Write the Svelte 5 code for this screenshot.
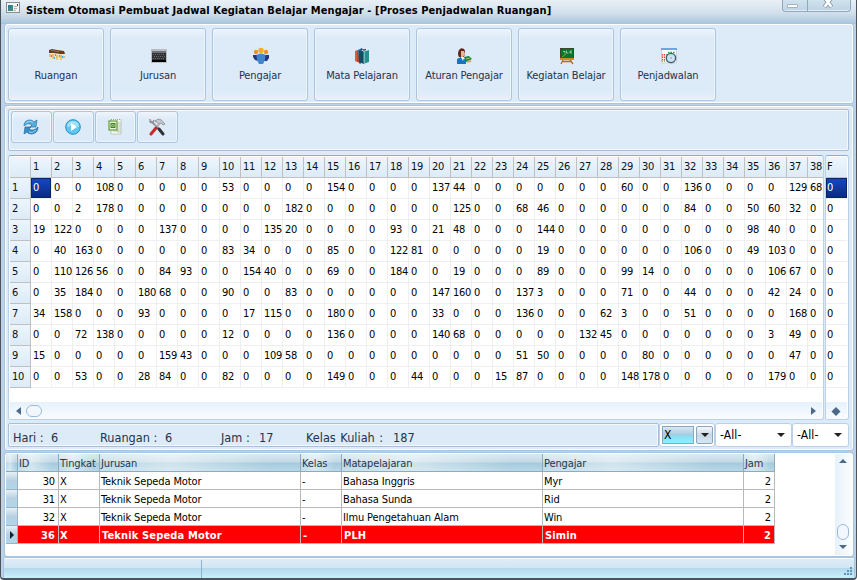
<script>
  const menu = ['Ruangan', 'Jurusan', 'Pengajar', 'Mata Pelajaran', 'Aturan Pengajar', 'Kegiatan Belajar', 'Penjadwalan'];
  const tools = ['refresh', 'play', 'excel', 'settings'];
  const columns = Array.from({ length: 38 }, (_, i) => i + 1);

  // Only the occupied slots are listed; every other slot is 0.
  const schedule = [
    { 4: 108, 10: 53, 15: 154, 20: 137, 21: 44, 29: 60, 32: 136, 37: 129, 38: 68 },
    { 3: 2, 4: 178, 13: 182, 21: 125, 24: 68, 25: 46, 32: 84, 35: 50, 36: 60, 37: 32 },
    { 1: 19, 2: 122, 7: 137, 12: 135, 13: 20, 18: 93, 20: 21, 21: 48, 25: 144, 35: 98, 36: 40 },
    { 2: 40, 3: 163, 10: 83, 11: 34, 15: 85, 18: 122, 19: 81, 25: 19, 32: 106, 35: 49, 36: 103 },
    { 2: 110, 3: 126, 4: 56, 7: 84, 8: 93, 11: 154, 12: 40, 15: 69, 18: 184, 21: 19, 25: 89, 29: 99, 30: 14, 36: 106, 37: 67 },
    { 2: 35, 3: 184, 6: 180, 7: 68, 10: 90, 13: 83, 20: 147, 21: 160, 24: 137, 25: 3, 29: 71, 32: 44, 36: 42, 37: 24 },
    { 1: 34, 2: 158, 6: 93, 11: 17, 12: 115, 15: 180, 20: 33, 24: 136, 28: 62, 29: 3, 32: 51, 37: 168 },
    { 3: 72, 4: 138, 10: 12, 15: 136, 20: 140, 21: 68, 27: 132, 28: 45, 36: 3, 37: 49 },
    { 1: 15, 7: 159, 8: 43, 12: 109, 13: 58, 24: 51, 25: 50, 30: 80, 37: 47 },
    { 3: 53, 6: 28, 7: 84, 10: 82, 15: 149, 19: 44, 23: 15, 24: 87, 29: 148, 30: 178, 36: 179 }
  ];

  const heads = ['', 'ID', 'Tingkat', 'Jurusan', 'Kelas', 'Matapelajaran', 'Pengajar', 'Jam'];
  const lessons = [
    [30, 'X', 'Teknik Sepeda Motor', '-', 'Bahasa Inggris', 'Myr', 2],
    [31, 'X', 'Teknik Sepeda Motor', '-', 'Bahasa Sunda', 'Rid', 2],
    [32, 'X', 'Teknik Sepeda Motor', '-', 'Ilmu Pengetahuan Alam', 'Win', 2],
    [36, 'X', 'Teknik Sepeda Motor', '-', 'PLH', 'Simin', 2]
  ];
</script>

<div class="window">
  <header class="title">
    <svg class="appicon" width="14" height="11" viewBox="0 0 14 11">
      <rect x=".5" y=".5" width="13" height="10" fill="#f4f4f2" stroke="#8c8f92" />
      <rect x="2" y="3" width="5" height="6" fill="#3c8a80" />
      <rect x="2" y="3" width="3" height="3" fill="#357a9c" />
      <path d="M8 4.500h3M8 6.500h3M8 8.500h2" stroke="#b0b4b6" />
      <path d="M11.500 2v2" stroke="#444" />
    </svg>
    <h1>Sistem Otomasi Pembuat Jadwal Kegiatan Belajar Mengajar - [Proses Penjadwalan Ruangan]</h1>
    <div class="winbtns">
      <span class="min"><i></i></span>
      <span class="close">
        <svg width="12" height="9" viewBox="0 0 12 9"><path d="M2.500-2.500l7 9.500M9.500-2.500l-7 9.500" stroke="#8297aa" stroke-width="4.200" /><path d="M2.500-2.500l6.800 9.300M9.500-2.500l-6.800 9.300" stroke="#fff" stroke-width="2.600" /></svg>
      </span>
    </div>
  </header>

  <nav class="panel menu">
    {#each menu as name, i}
      <button class="mbtn">
        <svg width="18" height="18" viewBox="0 0 18 18">
          {#if i === 0}
            <path d="M2 6h14v6l-4 1-4-1-6-1z" fill="#f1e3c4" />
            <path d="M1 3l3-1 5 1 7 1 1 3-5 0-6-1-5 0z" fill="#693b19" />
            <path d="M3 3l4 1 4 1" stroke="#a2714c" fill="none" />
            <path d="M2 7v3M5 7v4M9 8v3M13 8v3M16 9v2" stroke="#e9a03c" stroke-width="1.300" />
            <path d="M3 9h1M7 8h1M11 9h1M14 10h1M6 11h1" stroke="#35aedc" stroke-width="2" />
            <path d="M4 11h2M8 12h2M12 12h2" stroke="#edc94b" stroke-width="1.500" />
          {:else if i === 1}
            <path d="M1 2h16v14H1z" fill="#b9bcc0" />
            <path d="M2 4h14v11H2z" fill="#303235" />
            <path d="M2 4h14v2H2z" fill="#707276" />
            <path d="M3 7.500h12M4 9.500h11M3 11.500h12" stroke="#66696d" stroke-dasharray="1 1" />
            <path d="M2 14h14" stroke="#000" stroke-width="2" />
          {:else if i === 2}
            <circle cx="4" cy="5" r="2.200" fill="#ee922d" />
            <circle cx="14" cy="5" r="2.200" fill="#ee922d" />
            <path d="M1 8h4l1 6-3-1-2-3zM13 8h4v3l-2 3h-3z" fill="#263580" />
            <circle cx="9" cy="3.500" r="2.700" fill="#f4ae24" />
            <path d="M4.500 8Q9 5 13.500 8L13 13 11 17H7L5 13z" fill="#3f86cb" />
          {:else if i === 3}
            <path d="M1 4l3-1 2 13-5-2z" fill="#d93c27" />
            <path d="M4 3l4-2 1 14-3 2-1-1z" fill="#286695" />
            <path d="M8 2l4-1 3 2-5 2z" fill="#e8eff5" />
            <path d="M5 4l5 1v12l-5-2z" fill="#124d66" />
            <path d="M9 5l6-2v12l-6 2z" fill="#268f8e" />
            <path d="M10.500 5v11" stroke="#72bcb6" />
            <path d="M7 2l5 1M8 5l4-3" stroke="#26324d" stroke-width=".8" />
            <path d="M2 4v10" stroke="#f38162" stroke-width=".8" />
          {:else if i === 4}
            <path d="M3 3Q5 0 8 2q2 2 0 8H3Q1 7 3 3z" fill="#63251d" />
            <path d="M5 4l3 0 1 3-2 3H5z" fill="#edb58b" />
            <path d="M1 16v-4l4-2 5 3v4H1z" fill="#1974be" />
            <path d="M5 10l2 4 1-4z" fill="#fff" />
            <path d="M8 10l5-1 3 3-6 3z" fill="#1a843c" />
            <path d="M10 12l4-1" stroke="#a6cc60" />
            <path d="M11 15l4-1" stroke="#e2a171" stroke-width="2" />
          {:else if i === 5}
            <path d="M2 1h14v11H2z" fill="#3b452f" />
            <path d="M3 2h12v9H3z" fill="#08752d" />
            <path d="M5 4.500h2v2M8.500 3.500v2.500h2M14 4h-2v2h2" stroke="#b6d8b5" fill="none" stroke-width=".8" />
            <path d="M4 10L8 7" stroke="#89b93b" stroke-width=".8" />
            <path d="M2 11h14v2H2z" fill="#d28b25" />
            <path d="M5 13l-2 4M12 13l3 4M4 14.500h10" stroke="#b76c13" stroke-width="1.300" />
          {:else}
            <path d="M1.500 2h15v14h-15z" fill="#fafcff" stroke="#c6d5e1" />
            <path d="M1 1h16v2H1z" fill="#6da7db" />
            <path d="M2.500 7v8M4.500 7v8" stroke="#ee2d25" stroke-width="1.200" stroke-dasharray="1.500 1" />
            <path d="M7 7v8" stroke="#249944" stroke-width="1.500" stroke-dasharray="1.500 1" />
            <path d="M8 5.500h7" stroke="#249944" stroke-width="1.500" stroke-dasharray="1.500 1" />
            <circle cx="11" cy="11" r="4.700" fill="#badcf0" stroke="#4c5968" stroke-width="1.300" />
            <circle cx="11" cy="11" r="2.600" fill="#d1e8f6" />
            <circle cx="11" cy="11" r=".8" fill="#718294" />
          {/if}
        </svg>
        <span>{name}</span>
      </button>
    {/each}
  </nav>

  <main class="panel work">
    <div class="toolbar">
      {#each tools as tool}
        <button class="tbtn" aria-label={tool}>
          <svg width="18" height="18" viewBox="0 0 18 18">
            {#if tool === 'refresh'}
              <path d="M2 8Q2 2 8 2q3 0 4 2l3-2-1 7H8l2-2Q6 4 2 8z" fill="#55abd9" stroke="#2673ad" stroke-width=".7" />
              <path d="M16 9q0 6-6 7-4 0-5-2l-3 2 1-7h6l-2 2q4 3 9-2z" fill="#398ec7" stroke="#246a9e" stroke-width=".7" />
              <path d="M4 5Q7 2 11 4M7 14q3 2 7-2" fill="none" stroke="#a4dcf4" />
            {:else if tool === 'play'}
              <circle cx="9" cy="9" r="7.300" fill="#60c8f0" stroke="#238fcb" />
              <path d="M3 9Q3 3 9 3t6 6q-6-2-12 0z" fill="#a0e3fa" />
              <path d="M7 5l6 4-6 4z" fill="#fff" />
            {:else if tool === 'excel'}
              <path d="M5 1.500h10v14.500H5z" fill="#f5f7f1" stroke="#849778" stroke-width=".8" stroke-dasharray="1 1" />
              <path d="M12 4v11M14 4v11M7 13h6" stroke="#b5c0ad" stroke-width=".8" />
              <rect x="3" y="3" width="8" height="9" fill="#e9f2df" stroke="#639d3b" stroke-width="1.200" />
              <path d="M5 5.500l4 4M9 5.500l-4 4M5 5.500h4v4H5z" fill="none" stroke="#44841e" />
            {:else}
              <path d="M3 3l9 9" stroke="#9a9da0" stroke-width="2" />
              <path d="M2 1v3l3 1 1-3" fill="none" stroke="#8d9194" stroke-width="1.400" />
              <path d="M7 3q5-4 8 1l2 2-2 1-2-2-2 1z" fill="#c8cbce" stroke="#777b80" stroke-width=".7" />
              <path d="M12 5L8 10" stroke="#a9adb1" stroke-width="1.700" />
              <path d="M8 10l-5 6" stroke="#c52928" stroke-width="3" stroke-linecap="round" />
              <path d="M11 11l4 5" stroke="#303238" stroke-width="3" stroke-linecap="round" />
            {/if}
          </svg>
        </button>
      {/each}
    </div>

    <div class="grids">
      <section class="sheet wide">
        <div class="row head"><b></b>{#each columns as c}<span>{c}</span>{/each}</div>
        {#each schedule as slots, r}
          <div class="row"><b>{r + 1}</b>{#each columns as c}<span class:sel={r === 0 && c === 1}>{slots[c] ?? 0}</span>{/each}</div>
        {/each}
        <div class="hscroll"><i class="left"></i><i class="thumb"></i><i class="right"></i></div>
      </section>
      <section class="sheet narrow">
        <div class="row head"><span>F</span></div>
        {#each schedule as _, r}<div class="row"><span class:sel={r === 0}>0</span></div>{/each}
        <div class="hscroll"><svg width="10" height="9" viewBox="0 0 10 9"><path d="M5 0l4.500 4.500L5 9 .5 4.500z" fill="#4b6a89" /></svg></div>
      </section>
    </div>

    <div class="summary">
      <div class="stats">
        <p><span>Hari :</span><span>6</span></p>
        <p><span>Ruangan :</span><span>6</span></p>
        <p><span>Jam :</span><span>17</span></p>
        <p><span>Kelas Kuliah :</span><span>187</span></p>
      </div>
      <div class="combo active"><span>X</span><em><i></i></em></div>
      <div class="combo mid"><span>-All-</span><em><i></i></em></div>
      <div class="combo last"><span>-All-</span><em><i></i></em></div>
    </div>
  </main>

  <section class="panel list">
    <div class="table">
      <div class="tr th">{#each heads as h}<span>{h}</span>{/each}</div>
      {#each lessons as l, i}
        <div class="tr" class:picked={i === 3}>
          <span>{#if i === 3}<i class="mark"></i>{/if}</span>
          {#each l as v}<span>{v}</span>{/each}
        </div>
      {/each}
    </div>
    <div class="vscroll"><i class="up"></i><i class="vthumb"></i><i class="down"></i></div>
  </section>

  <footer>
    <span></span>
    <svg width="8" height="8" viewBox="0 0 8 8"><path d="M6 1h2M3 4h2M6 4h2M0 7h2M3 7h2M6 7h2" stroke="#5f95b8" stroke-width="2" /></svg>
  </footer>
</div>

<style>
  * { box-sizing: border-box; }
  :global(body) { margin: 0; }
  .window {
    width: 857px; height: 580px; overflow: hidden; display: flex; flex-direction: column;
    border: solid #4b545d; border-width: 0 1px 2px; padding: 0 3px 0 4px;
    background: #bcd2e8; border-radius: 0 0 4px 4px; color: #000;
    font: 11px/13px 'DejaVu Sans Condensed', 'DejaVu Sans', sans-serif; letter-spacing: -.12px;
  }
  button { font: inherit; letter-spacing: inherit; padding: 0; margin: 0; }
  .title { height: 24px; flex: none; margin: 0 -3px 0 -4px; padding-left: 5px; display: flex; align-items: flex-start; background: linear-gradient(#e9f0f6, #d2e0ec 55%, #adc7dd); border-bottom: 1px solid #a6c1da; }
  .appicon { margin-top: 2px; flex: none; }
  h1 { margin: 4px 0 0 6px; font-size: 11px; line-height: 14px; font-weight: bold; letter-spacing: .09px; white-space: nowrap; flex: 1; }
  .winbtns { width: 69px; height: 12px; margin-right: 5px; display: flex; border: 1px solid #8fa8bd; border-top: 0; border-radius: 0 0 4px 4px; background: linear-gradient(#d0e3ef, #bdd2e2); box-shadow: inset 0 -1px #e3edf5; }
  .min { width: 25px; border-right: 1px solid #8fa8bd; display: flex; justify-content: center; align-items: flex-start; padding: 4px 6px 0 0; }
  .min i { width: 11px; height: 4px; background: #fff; border: 1px solid #a1b1bf; border-radius: 1px; }
  .close { flex: 1; display: flex; justify-content: center; padding-right: 3px; }

  .panel { border: 1px solid #fff; outline: 1px solid #a9c4df; background: #ddeaf8; border-radius: 2px; flex: none; }
  .menu { height: 79px; padding: 3px 2px; display: flex; gap: 6px; }
  .mbtn { width: 96px; height: 73px; border: 1px solid #acc5e3; border-radius: 3px; box-shadow: inset 0 0 0 1px #edf4fc; background: linear-gradient(#edf4fc, #ddeaf8 9px, #ddeaf8 62px, #e7f1fb); color: #23334d; display: flex; flex-direction: column; align-items: center; padding-top: 18px; gap: 4px; }
  .mbtn svg { margin-left: 1px; }
  .mbtn span { white-space: nowrap; }

  .work { height: 344px; margin-top: 3px; padding: 2px; display: flex; flex-direction: column; }
  .toolbar { height: 42px; width: 841px; padding: 1px 2px; display: flex; gap: 1px; border: 1px solid #a6c0db; box-shadow: inset 0 0 0 1px #f5f9fd; border-radius: 2px; }
  .tbtn { width: 41px; height: 32px; padding-right: 1px; display: flex; align-items: center; justify-content: center; border: 1px solid #acc5e3; border-radius: 3px; background: linear-gradient(#eef5fc, #ddeaf8 8px); box-shadow: inset 0 0 0 1px #edf4fc; }

  .grids { margin-top: 4px; height: 266px; display: flex; gap: 1px; }
  .sheet { border: 1px solid #b9d2e9; border-top-color: #8eafcb; border-radius: 3px; background: #fff; padding: 1px 1px 0; overflow: hidden; display: flex; flex-direction: column; }
  .wide { width: 816px; }
  .narrow { width: 24px; padding: 1px 1px 0 0; }
  .row { display: flex; height: 21px; flex: none; width: max-content; }
  .row > * { width: 21px; height: 21px; flex: none; padding: 3px 0 0 2px; border: solid #efefef; border-width: 0 1px 1px 0; line-height: 14px; font-weight: normal; white-space: nowrap; letter-spacing: -.3px; }
  .row b, .head > * { background: linear-gradient(#edf5fc, #dcebf7); border-color: #c0c0c0; color: #0a1018; }
  .row .sel { background: linear-gradient(#1747c6, #082a7c); color: #fff; box-shadow: inset 0 0 0 1px #0a246a; }
  .narrow .row, .narrow .row > * { width: 21px; }
  .narrow .row > * { border-right: 0; padding-left: 1px; }
  .hscroll { margin-top: auto; height: 17px; display: flex; align-items: center; padding: 1px 6px 0; background: linear-gradient(#e6f1fb, #f9fcff); flex: none; }
  .hscroll i { width: 0; height: 0; border: 4px solid transparent; }
  .hscroll .left { border-left: 0; border-right: 5px solid #4b6a89; }
  .hscroll .right { margin-left: auto; border-right: 0; border-left: 5px solid #4b6a89; }
  .hscroll .thumb { width: 16px; height: 12px; margin-left: 5px; border: 1px solid #9db9d6; border-radius: 6px; background: #f1f7fd; }
  .narrow .hscroll { padding: 1px 1px 0 0; justify-content: center; }

  .summary { margin-top: 3px; height: 24px; display: flex; }
  .stats { width: 651px; border: 1px solid #a6c0db; border-radius: 2px; box-shadow: inset 0 0 0 1px #f5f9fd; display: flex; padding-left: 4px; font-size: 12.6px; line-height: 16px; color: #23334d; letter-spacing: 0; }
  .stats p { margin: 6px 0 0; display: flex; width: 87px; white-space: nowrap; }
  .stats p span:first-child { width: 38px; flex: none; }
  .stats p:nth-child(2) { width: 121px; }
  .stats p:nth-child(2) span:first-child { width: 65px; }
  .stats p:nth-child(3) { width: 85px; }
  .stats p:nth-child(4) { width: 120px; }
  .stats p:nth-child(4) span:first-child { width: 87px; word-spacing: 1px; }
  .combo { height: 24px; display: flex; background: #fff; border: 1px solid #bad0e6; border-radius: 3px; line-height: 14px; font-size: 12px; letter-spacing: .1px; }
  .combo span { flex: 1; padding: 4px 0 0 4px; }
  .combo em { width: 17px; margin-right: 2px; display: flex; align-items: center; justify-content: center; }
  .combo em i { border: 4px solid transparent; border-top-color: #222; border-bottom: 0; }
  .combo.active { width: 56px; padding: 2px 1px 2px 2px; gap: 2px; }
  .combo.active span { border: 1px solid #8ba5bd; background: linear-gradient(#d8e9f3, #a8cce0 48%, #8ed9ec 52%, #86f4ff); padding: 1px 0 0 1px; }
  .combo.active em { margin: 0; border: 1px solid #8ba5bd; border-radius: 2px; background: linear-gradient(#f4f8fb, #c7d8e6 50%, #d8e6f0); }
  .combo.mid { width: 77px; }
  .combo.last { width: 57px; }

  .list { height: 103px; margin-top: 3px; background: #fff; display: flex; justify-content: space-between; }
  .tr { display: grid; grid-template-columns: 12px 41px 41px 201px 41px 201px 201px 31px; height: 18px; line-height: 14px; }
  .tr > span { border: solid #b9b9b9; border-width: 0 1px 1px 0; padding: 3px 0 0 1px; overflow: hidden; white-space: nowrap; }
  .tr:not(.th) > span:nth-child(2), .tr:not(.th) > span:last-child { text-align: right; padding-right: 3px; }
  .tr > span:first-child { background: linear-gradient(#e7f0f6, #b7d0e1 50%, #b0d7e8); border-color: #9bb2c4; padding: 0; display: flex; align-items: center; justify-content: center; }
  .th > span, .th > span:first-child { background: linear-gradient(90deg, #fff3, #fff7 35%, #fff0 85%), linear-gradient(#d9e8f0, #c2d9e6 48%, #a5cadd 52%, #b7d8e7); border-color: #8fa9bd; color: #26384a; }
  .picked > span:not(:first-child) { background: #f00; color: #fff; font-weight: bold; letter-spacing: .15px; }
  .tr.picked > span:nth-child(n + 4) { padding-left: 2px; }
  .mark { border: 4px solid transparent; border-left-color: #14222e; border-right: 0; }
  .vscroll { width: 16px; margin-right: 1px; display: flex; flex-direction: column; align-items: center; background: linear-gradient(90deg, #e6f1fb, #fafdff); padding: 5px 0 6px; }
  .up { border: 4px solid transparent; border-bottom-color: #4b6a89; border-top: 0; }
  .down { border: 4px solid transparent; border-top-color: #4b6a89; border-bottom: 0; margin-top: 5px; }
  .vthumb { width: 12px; height: 16px; margin-top: auto; border: 1px solid #9db9d6; border-radius: 6px; background: #f1f7fd; }

  footer { flex: 1; margin: 2px -1px 0; border-top: 1px solid #f6fafd; outline: 1px solid #a9c4df; background: linear-gradient(#deedf7, #d2e6f2 45%, #b4d9ec 50%, #c8f0fc); display: flex; justify-content: space-between; align-items: flex-end; }
  footer span { width: 198px; height: 18px; align-self: center; border-right: 1px solid #8fb3cd; }
  footer svg { margin: 0 2px 3px 0; }
</style>
